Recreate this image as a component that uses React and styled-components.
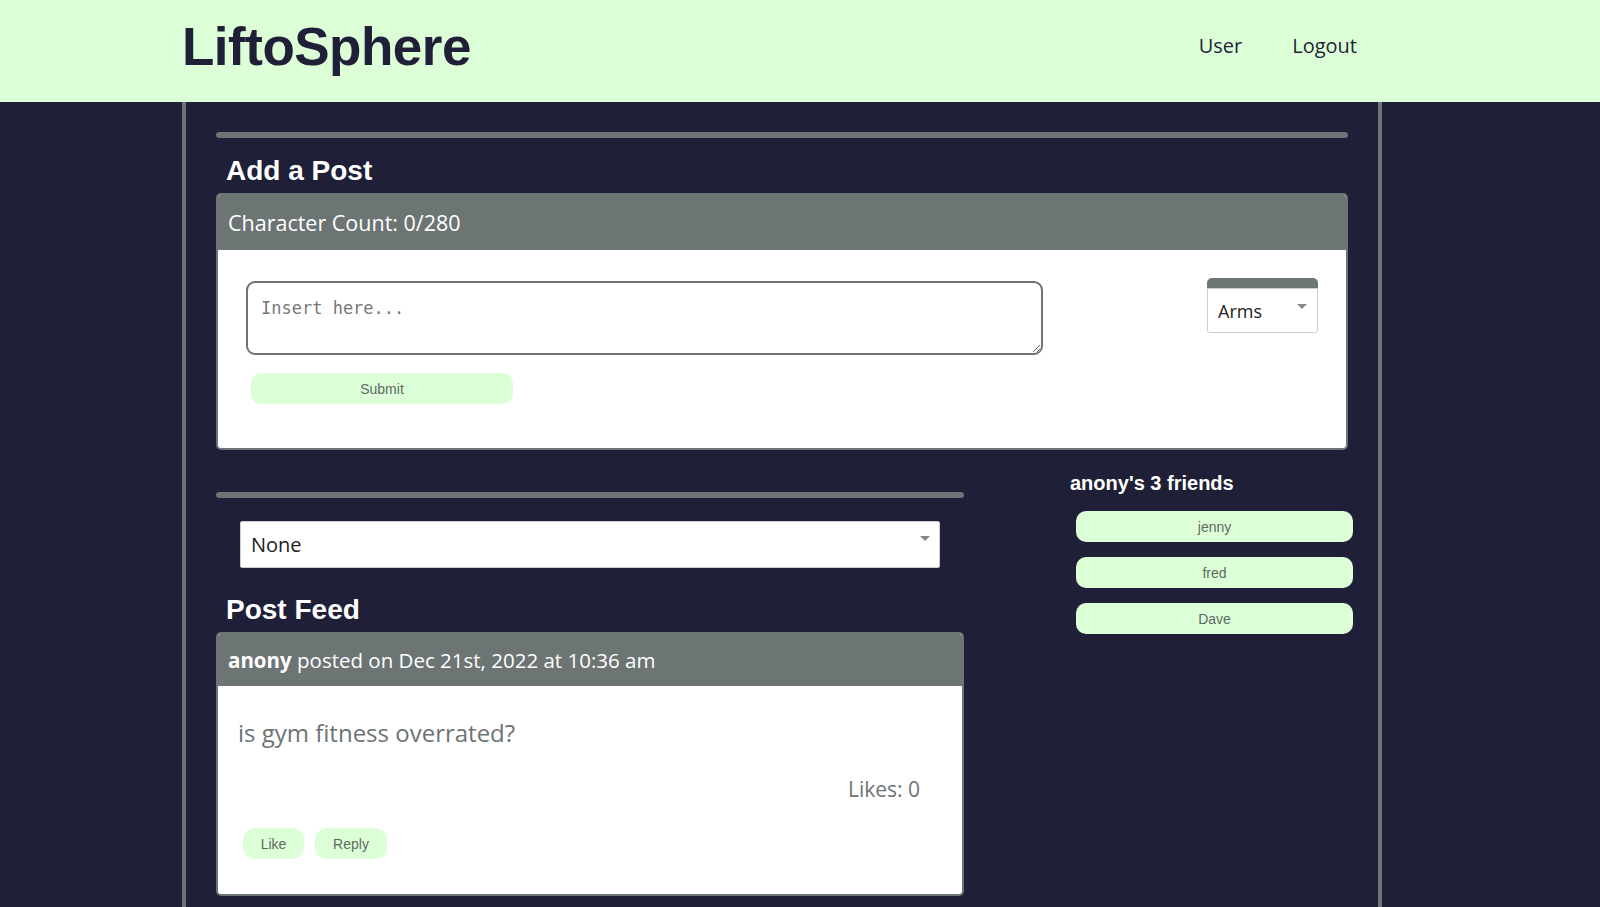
import React, { useState } from 'react';
import styled, { createGlobalStyle } from 'styled-components';

const NAVY = '#1f1f38';
const GREY = '#6c7474';
const MINT = '#dcffd8';
const BODY_FONT = "'Open Sans', 'Noto Sans', sans-serif";

const GlobalStyle = createGlobalStyle`
  html, body {
    margin: 0;
    padding: 0;
    background: ${NAVY};
    font-family: ${BODY_FONT};
  }
  * {
    box-sizing: border-box;
  }
`;

const Header = styled.header`
  background: ${MINT};
  height: 102px;
`;

const HeaderInner = styled.div`
  width: 1200px;
  margin-left: 182px;
  height: 100%;
  display: flex;
  align-items: center;
  justify-content: space-between;
  padding: 0 25px 0 0;
`;

const Logo = styled.h1`
  margin: 0 0 10px;
  font-family: 'Liberation Sans', Arial, sans-serif;
  font-weight: 700;
  font-size: 53px;
  letter-spacing: -0.5px;
  color: ${NAVY};
`;

const Nav = styled.nav`
  display: flex;
  gap: 50px;
  margin-bottom: 12px;

  a {
    font-family: ${BODY_FONT};
    font-size: 20px;
    color: ${NAVY};
    text-decoration: none;
  }
`;

const Main = styled.main`
  width: 1200px;
  margin-left: 182px;
  min-height: calc(100vh - 102px);
  border-left: 4px solid ${GREY};
  border-right: 4px solid ${GREY};
  padding: 30px 30px 30px;
`;

const Rule = styled.div`
  height: 6px;
  border-radius: 3px;
  background: ${GREY};
`;

const SectionTitle = styled.h2`
  margin: ${(p) => p.$top || 15}px 0 6px 10px;
  font-family: 'Liberation Sans', Arial, sans-serif;
  font-weight: 700;
  font-size: 28px;
  line-height: 32px;
  color: #ffffff;
`;

const Card = styled.section`
  border: 2px solid ${GREY};
  border-radius: 5px;
  overflow: hidden;
  background: #ffffff;
`;

const CardHeader = styled.div`
  background: ${GREY};
  height: ${(p) => p.$height}px;
  display: flex;
  align-items: center;
  padding-left: 10px;
  color: #ffffff;
  font-size: ${(p) => p.$size}px;

  b {
    font-weight: 700;
  }
`;

const PostForm = styled.div`
  display: flex;
  justify-content: space-between;
  align-items: flex-start;
  padding: 31px 28px 0 28px;
  height: 198px;
`;

const FormLeft = styled.div`
  display: flex;
  flex-direction: column;
  align-items: flex-start;
`;

const TextBox = styled.textarea`
  width: 797px;
  height: 74px;
  border: 2px solid ${GREY};
  border-radius: 9px;
  padding: 15px 13px;
  font-family: 'DejaVu Sans Mono', 'Liberation Mono', monospace;
  font-size: 17px;
  resize: vertical;
  outline: none;

  &::placeholder {
    color: #777;
  }
`;

const PillButton = styled.button`
  background: ${MINT};
  border: none;
  border-radius: ${(p) => p.$radius || 10}px;
  width: ${(p) => p.$width}px;
  height: ${(p) => p.$height || 31}px;
  margin: ${(p) => p.$margin || '0'};
  font-family: 'Liberation Sans', Arial, sans-serif;
  font-size: 14px;
  color: #5e6a60;
  cursor: pointer;
  padding: 0;
`;

const SelectWrap = styled.div`
  position: relative;
  width: ${(p) => p.$width}px;
  margin-top: ${(p) => p.$shift || 0}px;

  &::after {
    content: '';
    position: absolute;
    right: ${(p) => p.$arrowRight}px;
    top: ${(p) => p.$arrowTop}px;
    border-left: 5px solid transparent;
    border-right: 5px solid transparent;
    border-top: 5px solid #888;
    pointer-events: none;
  }
`;

const CategoryCap = styled.div`
  height: 10px;
  background: ${GREY};
  border-radius: 5px 5px 0 0;
`;

const Select = styled.select`
  appearance: none;
  width: 100%;
  height: ${(p) => p.$height}px;
  border: 1px solid #cccccc;
  border-radius: ${(p) => (p.$capped ? '0 0 3px 3px' : '2px')};
  background: #ffffff;
  padding-left: 10px;
  font-family: ${BODY_FONT};
  font-size: ${(p) => p.$size}px;
  color: #222;
  outline: none;
`;

const Lower = styled.div`
  display: flex;
  align-items: flex-start;
`;

const FeedColumn = styled.div`
  width: 748px;
  padding-top: 42px;
`;

const FilterRow = styled.div`
  padding: 23px 24px 0;
`;

const PostBody = styled.div`
  height: 208px;
  padding: 31px 20px 0 20px;
  color: ${GREY};
`;

const PostText = styled.p`
  margin: 0;
  font-size: 24px;
  line-height: 32px;
`;

const Likes = styled.div`
  text-align: right;
  margin: 26px 22px 0 0;
  font-size: 21px;
  line-height: 28px;
`;

const PostActions = styled.div`
  display: flex;
  gap: 11px;
  margin: 25px 0 0 5px;
`;

const FriendsColumn = styled.aside`
  margin-left: 106px;
  padding-top: 22px;
  width: 283px;
`;

const FriendsTitle = styled.h3`
  margin: 0 0 16px;
  font-family: 'Liberation Sans', Arial, sans-serif;
  font-weight: 700;
  font-size: 20px;
  line-height: 23px;
  color: #ffffff;
`;

const FriendList = styled.div`
  display: flex;
  flex-direction: column;
  gap: 15px;
  padding-left: 6px;
`;

export default function App() {
  const [text, setText] = useState('');
  const friends = ['jenny', 'fred', 'Dave'];

  return (
    <>
      <GlobalStyle />
      <Header>
        <HeaderInner>
          <Logo>LiftoSphere</Logo>
          <Nav>
            <a href="#">User</a>
            <a href="#">Logout</a>
          </Nav>
        </HeaderInner>
      </Header>
      <Main>
        <Rule />
        <SectionTitle $top={17}>Add a Post</SectionTitle>
        <Card>
          <CardHeader $height={55} $size={21.5}>
            Character Count: {text.length}/280
          </CardHeader>
          <PostForm>
            <FormLeft>
              <TextBox
                placeholder="Insert here..."
                value={text}
                onChange={(e) => setText(e.target.value)}
              />
              <PillButton $width={262} $margin="18px 0 0 5px">
                Submit
              </PillButton>
            </FormLeft>
            <SelectWrap $width={111} $arrowRight={11} $arrowTop={26} $shift={-3}>
              <CategoryCap />
              <Select $height={45} $size={18} $capped defaultValue="Arms">
                <option>Arms</option>
                <option>Legs</option>
                <option>Chest</option>
                <option>Back</option>
              </Select>
            </SelectWrap>
          </PostForm>
        </Card>
        <Lower>
          <FeedColumn>
            <Rule />
            <FilterRow>
              <SelectWrap $width={700} $arrowRight={10} $arrowTop={15}>
                <Select $height={47} $size={20} defaultValue="None">
                  <option>None</option>
                  <option>Arms</option>
                  <option>Legs</option>
                </Select>
              </SelectWrap>
            </FilterRow>
            <SectionTitle $top={26}>Post Feed</SectionTitle>
            <Card>
              <CardHeader $height={52} $size={20.5}>
                <span>
                  <b>anony</b> posted on Dec 21st, 2022 at 10:36 am
                </span>
              </CardHeader>
              <PostBody>
                <PostText>is gym fitness overrated?</PostText>
                <Likes>Likes: 0</Likes>
                <PostActions>
                  <PillButton $width={61} $radius={12}>Like</PillButton>
                  <PillButton $width={72} $radius={12}>Reply</PillButton>
                </PostActions>
              </PostBody>
            </Card>
          </FeedColumn>
          <FriendsColumn>
            <FriendsTitle>anony's {friends.length} friends</FriendsTitle>
            <FriendList>
              {friends.map((f) => (
                <PillButton key={f} $width={277}>
                  {f}
                </PillButton>
              ))}
            </FriendList>
          </FriendsColumn>
        </Lower>
      </Main>
    </>
  );
}
